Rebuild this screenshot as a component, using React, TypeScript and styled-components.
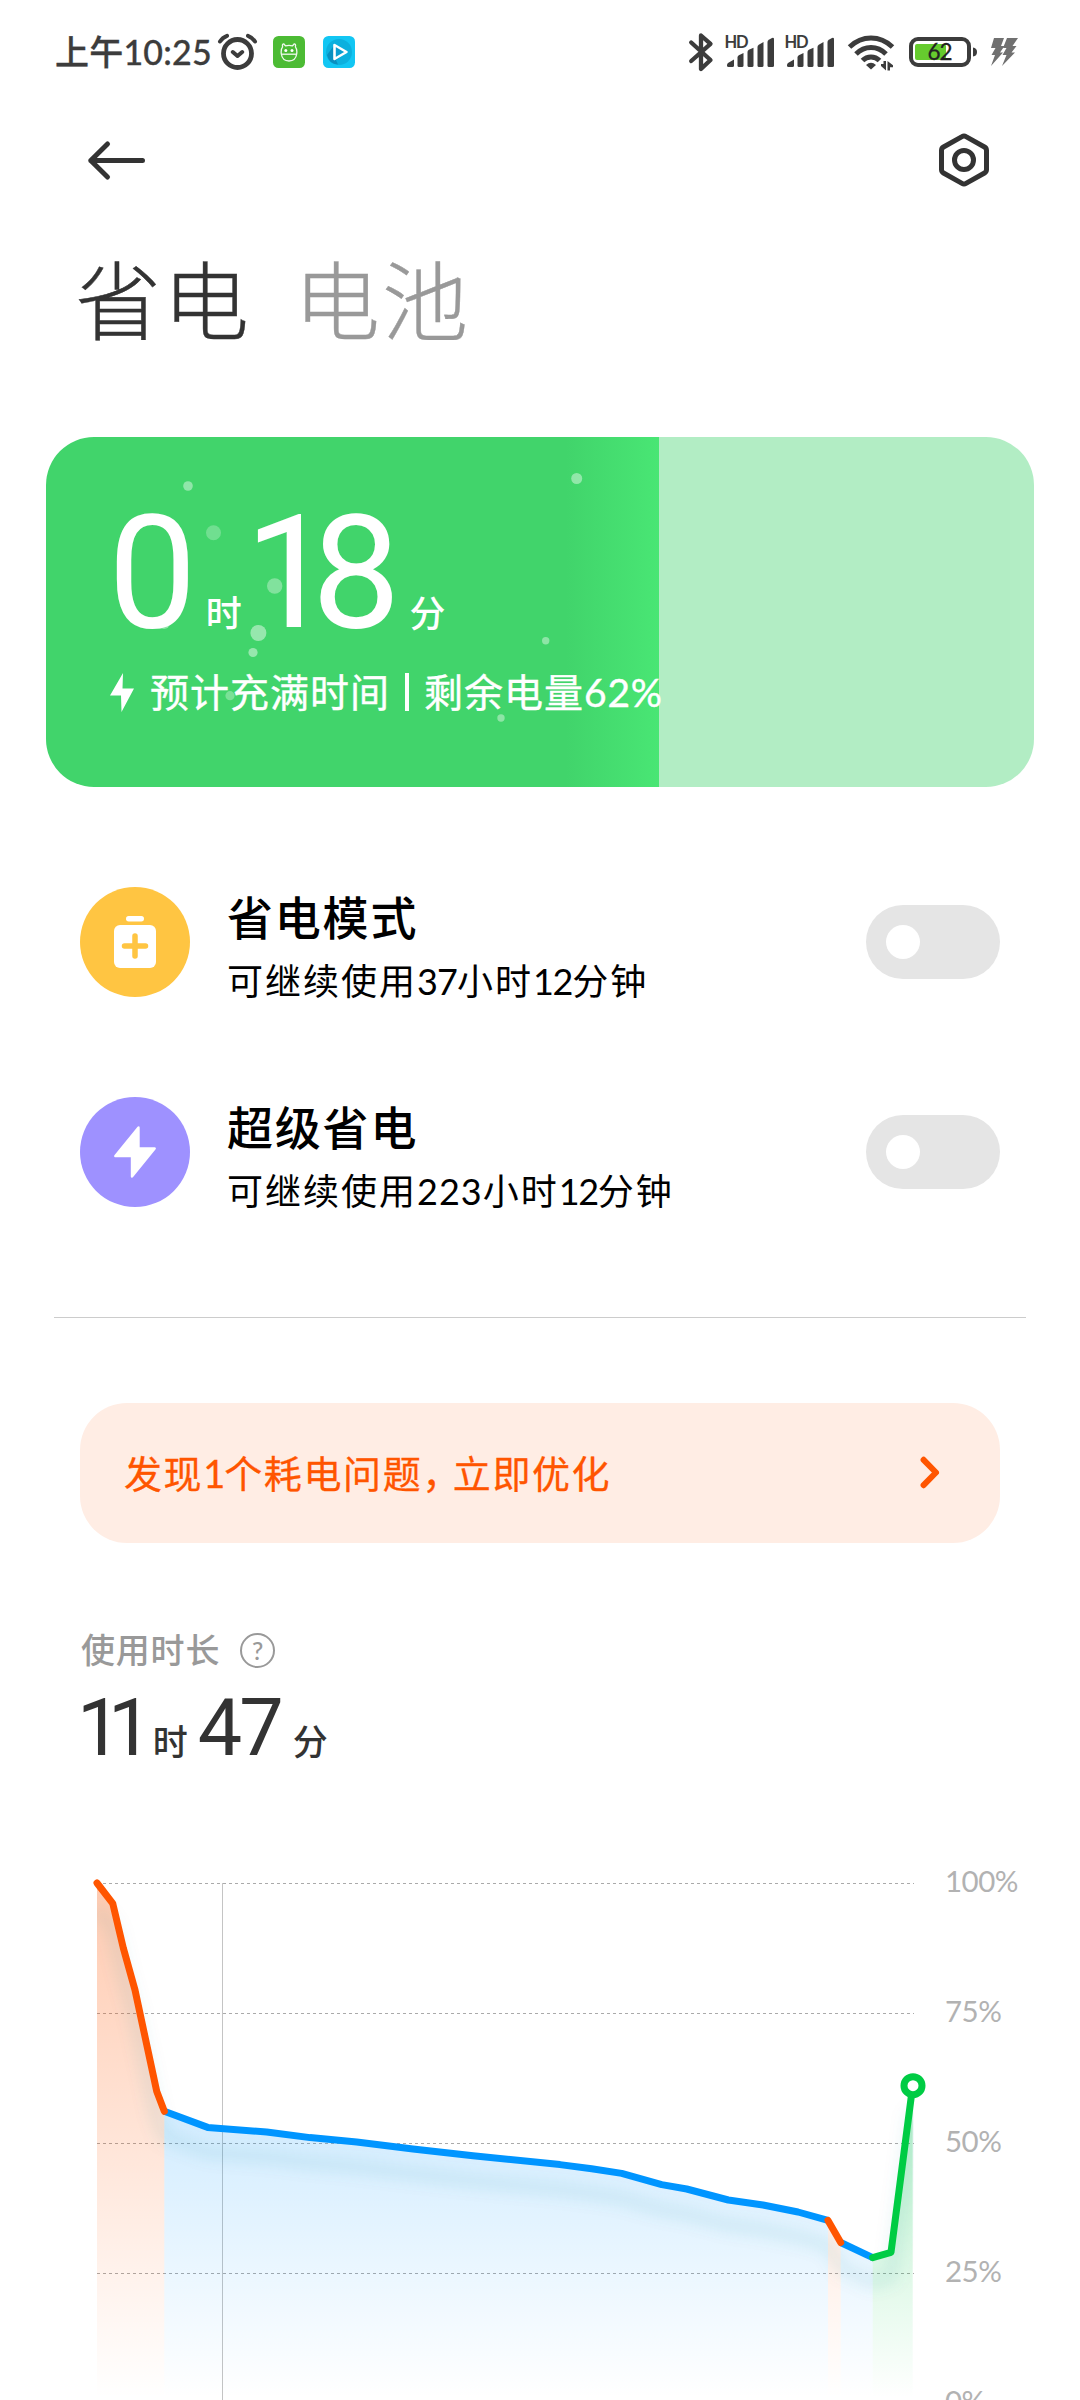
import React from "react";
import styled, { createGlobalStyle } from "styled-components";

const GlobalStyle = createGlobalStyle`
  html, body { margin: 0; padding: 0; background: #fff; }
  * { box-sizing: border-box; }
`;

const textStack = `Lato, "Noto Sans CJK SC", sans-serif`;
const digitStack = `Roboto, "Noto Sans CJK SC", sans-serif`;

const Page = styled.main`
  width: 1080px;
  height: 2400px;
  overflow: hidden;
  display: flex;
  flex-direction: column;
  background: #fff;
  color: #333;
  font-family: ${textStack};
  white-space: nowrap;
`;

const StatusBar = styled.header`
  height: 104px;
  flex: none;
  display: flex;
  align-items: center;
  padding: 0 62px 0 55px;
`;

const Clock = styled.span`
  width: 161px;
  font-size: 34px;
  font-weight: 500;
  line-height: 40px;
  letter-spacing: 0.2px;
  color: #3c3c3c;
  -webkit-text-stroke: 0.3px #3c3c3c;
`;

const Glyph = styled.svg<{ $ml?: number }>`
  display: block;
  flex: none;
  overflow: visible;
  margin-left: ${(p) => p.$ml ?? 0}px;
`;

const StatusRight = styled.div`
  display: flex;
  align-items: center;
  margin-left: auto;
`;

const NavBar = styled.nav`
  height: 112px;
  flex: none;
  display: flex;
  align-items: center;
  justify-content: space-between;
  padding: 0 91px 0 88px;
`;

const Tabs = styled.div`
  display: flex;
  flex: none;
  height: 120px;
  gap: 43px;
  margin-top: 25px;
  padding-left: 75px;
`;

const Tab = styled.span<{ $active?: boolean }>`
  font-size: 86px;
  font-weight: 300;
  line-height: 120px;
  letter-spacing: 2px;
  color: ${(p) => (p.$active ? "#333" : "#999")};
  -webkit-text-stroke: 0.4px currentColor;
`;

const ChargeCard = styled.section`
  position: relative;
  flex: none;
  width: 988px;
  height: 350px;
  margin: 76px 46px 0;
  padding: 56px 0 0 62px;
  border-radius: 48px;
  overflow: hidden;
  color: #fff;
  background: linear-gradient(90deg, #41d46b 0, #41d46b 520px, #49e674 613px, #b2edc4 613px);
`;

const Bubbles = styled.svg`
  position: absolute;
  inset: 0;
`;

const ChargeTime = styled.div`
  position: relative;
  display: flex;
  align-items: baseline;
  height: 160px;
  line-height: 160px;
`;

const ChargeDigits = styled.span<{ $ml?: number; $tight?: number }>`
  font-family: ${digitStack};
  font-size: 158px;
  margin-left: ${(p) => p.$ml ?? 0}px;
  letter-spacing: ${(p) => p.$tight ?? 0}px;
`;

const ChargeUnit = styled.span<{ $ml: number }>`
  font-size: 36px;
  font-weight: 500;
  margin-left: ${(p) => p.$ml}px;
`;

const ChargeNote = styled.div`
  position: relative;
  display: flex;
  align-items: center;
  height: 60px;
  margin-top: 9px;
  font-size: 39px;
  line-height: 60px;
  letter-spacing: 1px;
  -webkit-text-stroke: 0.4px #fff;
`;

const NoteText = styled.span`
  margin-left: 16px;
`;

const NoteBar = styled.i`
  width: 4px;
  height: 38px;
  margin: 0 15px 0 15px;
  background: #fff;
`;

const Num = styled.span<{ $ls: number }>`
  letter-spacing: ${(p) => p.$ls}px;
`;

const Modes = styled.section`
  flex: none;
  display: flex;
  flex-direction: column;
  gap: 100px;
  padding: 100px 80px 0;
`;

const ModeRow = styled.div`
  display: flex;
  align-items: center;
  height: 110px;
`;

const ModeIcon = styled.div<{ $color: string }>`
  width: 110px;
  height: 110px;
  border-radius: 50%;
  display: flex;
  align-items: center;
  justify-content: center;
  background: ${(p) => p.$color};
`;

const ModeText = styled.div`
  display: flex;
  flex-direction: column;
  margin-left: 37px;
  padding-top: 14px;
  color: #000;
`;

const ModeTitle = styled.span`
  font-size: 46px;
  font-weight: 500;
  line-height: 64px;
  letter-spacing: 1.8px;
`;

const ModeDetail = styled.span`
  font-size: 36px;
  line-height: 62px;
  letter-spacing: 2px;
`;

const Switch = styled.button`
  width: 134px;
  height: 74px;
  margin-left: auto;
  padding: 0 20px;
  border: 0;
  border-radius: 37px;
  display: flex;
  align-items: center;
  background: #e5e5e5;
`;

const Knob = styled.span`
  width: 34px;
  height: 34px;
  border-radius: 50%;
  background: #fff;
`;

const Divider = styled.hr`
  flex: none;
  width: 972px;
  height: 1px;
  margin: 110px 54px 0;
  border: 0;
  background: #ccc;
`;

const Notice = styled.section`
  flex: none;
  display: flex;
  align-items: center;
  justify-content: space-between;
  height: 140px;
  margin: 85px 80px 0;
  padding: 0 59px 0 44px;
  border-radius: 47px;
  background: #ffede4;
  color: #ff5500;
  font-size: 38px;
  line-height: 60px;
  letter-spacing: 1.6px;
  -webkit-text-stroke: 0.3px #ff5500;
`;

const UsageLabel = styled.div`
  flex: none;
  display: flex;
  align-items: center;
  gap: 20px;
  height: 44px;
  margin-top: 85px;
  padding-left: 81px;
  font-size: 34px;
  font-weight: 500;
  line-height: 44px;
  letter-spacing: 0.8px;
  color: #999;
`;

const Help = styled.span`
  width: 35px;
  height: 35px;
  border: 2px solid #999;
  border-radius: 50%;
  font-size: 25px;
  line-height: 31px;
  letter-spacing: 0;
  text-align: center;
`;

const UsageTime = styled.div`
  flex: none;
  display: flex;
  align-items: baseline;
  height: 80px;
  margin-top: 16px;
  padding-left: 77px;
  line-height: 80px;
`;

const UsageDigits = styled.span<{ $ml?: number; $tight: number }>`
  font-family: ${digitStack};
  font-size: 79px;
  margin-left: ${(p) => p.$ml ?? 0}px;
  letter-spacing: ${(p) => p.$tight}px;
`;

const UsageUnit = styled.span<{ $ml: number }>`
  font-size: 35px;
  font-weight: 500;
  margin-left: ${(p) => p.$ml}px;
`;

const ChartPanel = styled.section`
  flex: none;
  display: flex;
  height: 640px;
  margin-top: 82px;
  padding-left: 97px;
`;

const Scale = styled.div`
  display: flex;
  flex-direction: column;
  padding-left: 28px;
  padding-top: 13px;
`;

const ScaleLabel = styled.span`
  flex: none;
  height: 130px;
  font-size: 29.5px;
  line-height: 36px;
  letter-spacing: -0.5px;
  color: #b2b2b2;
`;

type Point = [number, number];

const heavyStart: Point[] = [[0, 33], [15.7, 53.3], [26.3, 98], [38, 140], [59.7, 241.3], [67.3, 261.3]];
const steady: Point[] = [
  [67.3, 261.3], [110.7, 277.4], [169.7, 282], [213, 287.6], [259.7, 292], [316, 299], [376, 305.8],
  [463, 314.6], [494.7, 318.8], [524.7, 323.4], [564.7, 334.6], [589.7, 339], [631.3, 350],
  [666, 355], [701, 362], [731, 370.4],
];
const heavyEnd: Point[] = [[731, 370.4], [743.7, 392.5]];
const steadyEnd: Point[] = [[743.7, 392.5], [775.7, 407.6]];
const charging: Point[] = [[775.7, 407.6], [794, 402.3], [815.7, 235.7]];

const line = (pts: Point[]) => "M" + pts.map((p) => p.join(" ")).join("L");
const area = (pts: Point[]) => `${line(pts)}V550H${pts[0][0]}Z`;
const whole = [...heavyStart, ...steady, ...heavyEnd, ...steadyEnd, ...charging];

const segments = [
  { pts: steady, color: "#0095ff", fill: "url(#blueFill)" },
  { pts: steadyEnd, color: "#0095ff", fill: "url(#blueFill)" },
  { pts: heavyStart, color: "#ff5500", fill: "url(#orangeFill)" },
  { pts: heavyEnd, color: "#ff5500", fill: "url(#orangeFill)" },
  { pts: charging, color: "#00cc44", fill: "url(#greenFill)" },
];

function Fade({ id, color, from, opacity }: { id: string; color: string; from: number; opacity: number }) {
  return (
    <linearGradient id={id} gradientUnits="userSpaceOnUse" x1="0" x2="0" y1={from} y2="548">
      <stop offset="0" stopColor={color} stopOpacity={opacity} />
      <stop offset="1" stopColor={color} stopOpacity="0" />
    </linearGradient>
  );
}

function BatteryChart() {
  return (
    <Glyph width="820" height="550" viewBox="0 0 820 550">
      <defs>
        <Fade id="orangeFill" color="#ff5500" from={33} opacity={0.31} />
        <Fade id="blueFill" color="#0095ff" from={261} opacity={0.18} />
        <Fade id="greenFill" color="#00cc44" from={235} opacity={0.31} />
        <filter id="soft" x="-10%" y="-10%" width="120%" height="130%">
          <feGaussianBlur stdDeviation="7.5" />
        </filter>
        <clipPath id="plot"><rect x="0" y="0" width="817" height="550" /></clipPath>
      </defs>
      {[33.5, 163.5, 293.5, 423.5].map((y) => (
        <path key={y} d={`M0 ${y}H817`} stroke="#aaa" strokeWidth="1" strokeDasharray="3 3" />
      ))}
      <path d="M125.5 33V550" stroke="#c4c4c4" strokeWidth="1" />
      {segments.map((s, i) => <path key={i} d={area(s.pts)} fill={s.fill} />)}
      <g clipPath="url(#plot)">
        <path d={line(whole)} transform="translate(0 25)" fill="none" stroke="#008490" strokeOpacity="0.1" strokeWidth="12" filter="url(#soft)" />
      </g>
      {segments.map((s, i) => (
        <path key={i} d={line(s.pts)} fill="none" stroke={s.color} strokeWidth="7" strokeLinecap={s.color === "#0095ff" ? "butt" : "round"} strokeLinejoin="round" />
      ))}
      <circle cx="816" cy="235.7" r="9" fill="#fff" stroke="#00cc44" strokeWidth="7" />
    </Glyph>
  );
}

function Signal({ ml }: { ml: number }) {
  return (
    <Glyph $ml={ml} width="50" height="40" viewBox="0 0 50 40" fill="#3c3c3c">
      <text x="-0.5" y="16" fontFamily="Lato, sans-serif" fontSize="16.5" fontWeight="700" textLength="24">HD</text>
      <path d="M2 33.2Q2 32 3 31L9 27.4V33.5Q9 35 7.600 35H3.500Q2 35 2 33.500Z" />
      <path d="M12.500 25.500Q12.500 24 13.800 23.300L18.500 21V33.500Q18.500 35 17 35H14Q12.500 35 12.500 33.500Z" />
      <path d="M22.500 20Q22.500 18.500 23.800 17.800L28.500 15.800V33.500Q28.500 35 27 35H24Q22.500 35 22.500 33.500Z" />
      <path d="M32.500 15Q32.500 13.500 33.800 12.700L38.500 10V33.500Q38.500 35 37 35H34Q32.500 35 32.500 33.500Z" />
      <path d="M42.500 10Q42.500 8.500 43.800 7.700L47 6Q49 5.300 49 7.300V33.500Q49 35 47.500 35H44Q42.500 35 42.500 33.500Z" />
    </Glyph>
  );
}

type ModeProps = { color: string; title: string; detail: React.ReactNode; children: React.ReactNode };

function Mode({ color, title, detail, children }: ModeProps) {
  return (
    <ModeRow>
      <ModeIcon $color={color}>{children}</ModeIcon>
      <ModeText>
        <ModeTitle>{title}</ModeTitle>
        <ModeDetail>{detail}</ModeDetail>
      </ModeText>
      <Switch role="switch" aria-checked={false}><Knob /></Switch>
    </ModeRow>
  );
}

const bubbles = [
  [142, 49, 4.8, 0.42], [167.5, 95.7, 7.5, 0.25], [228.7, 149, 7.7, 0.34], [212.4, 196, 8, 0.45],
  [207, 215.5, 4.6, 0.45], [184, 258.7, 4.6, 0.3], [530.7, 41.5, 5.5, 0.42], [499.7, 203.7, 3.7, 0.4],
  [455, 281, 3.7, 0.4], [118, 186, 6, 0.4],
];

export default function App() {
  return (
    <Page>
      <GlobalStyle />
      <StatusBar>
        <Clock>上午10:25</Clock>
        <Glyph $ml={2} width="40" height="40" viewBox="0 0 40 40" fill="none" stroke="#3c3c3c" strokeWidth="4.800" strokeLinecap="round" strokeLinejoin="round">
          <circle cx="19.500" cy="21.500" r="14" />
          <path d="M2 9.500Q4.500 5.500 9 3.800M30 3.800Q34.500 5.500 37 9.500M14.800 20L19.500 24L24.200 20" strokeWidth="4" />
        </Glyph>
        <Glyph $ml={15} width="32" height="32" viewBox="0 0 32 32">
          <rect width="32" height="32" rx="5.500" fill="#4cbb34" />
          <g fill="none" stroke="#fff" strokeWidth="1.300" strokeLinejoin="round" opacity=".92">
            <path d="M8.300 18C7.800 14 9 11.500 9.600 10.800C9 8.500 10.300 7 11.500 8.700L12.500 9.800Q16 8.800 19.500 9.800L20.500 8.700C21.700 7 23 8.500 22.400 10.800C23 11.500 24.200 14 23.700 18C23 22.500 20 25 16 25S9 22.500 8.300 18Z" />
            <path d="M8.300 18.200H23.700" />
          </g>
          <circle cx="12.800" cy="14.500" r="1.500" fill="#fff" /><circle cx="19" cy="14.500" r="1.500" fill="#fff" />
        </Glyph>
        <Glyph $ml={18} width="32" height="32" viewBox="0 0 32 32">
          <rect width="32" height="32" rx="5.500" fill="#12c6f3" />
          <circle cx="16" cy="16" r="13" fill="#0cb0de" />
          <path d="M4 19L12 8L25 16L13 24L15 28.500Q6 28 4 19Z" fill="#088fc0" />
          <path d="M11.500 9V23L23.500 16Z" fill="#0a9dd0" stroke="#fff" strokeWidth="2.600" strokeLinejoin="round" />
        </Glyph>
        <StatusRight>
          <Glyph width="24" height="40" viewBox="0 0 24 40" fill="none" stroke="#3c3c3c" strokeWidth="4.300" strokeLinecap="round" strokeLinejoin="round">
            <path d="M2.200 10.500L21.500 28L12 37V3.500L21.500 11.800L2.200 29" />
          </Glyph>
          <Signal ml={12} />
          <Signal ml={10} />
          <Glyph $ml={13} width="46" height="40" viewBox="0 0 46 40" fill="none" stroke="#3c3c3c" strokeWidth="5">
            <path d="M1.500 15Q11 6 23 6T44.500 15M8 22Q14.500 15.500 23 15.500T38 22M14.500 28.500Q18 25 23 25T31.500 28.500" />
            <path d="M18 33Q23 28.500 28 33L23 37.500Z" fill="#3c3c3c" stroke="none" />
            <path d="M35.500 29H38V38.500L33 34V32H35.500ZM39.500 38.500V29L45 33.300V35.200H42V38.500Z" fill="#3c3c3c" stroke="none" />
          </Glyph>
          <Glyph $ml={15} width="68" height="40" viewBox="0 0 68 40">
            <rect x="6" y="12" width="31" height="16" rx="2" fill="#66cb2e" />
            <rect x="2" y="7" width="58" height="26" rx="7" fill="none" stroke="#3c3c3c" strokeWidth="4" />
            <path d="M64 15.500Q68 16 68 20T64 24.500Z" fill="#3c3c3c" />
            <text x="18.500" y="28" fontFamily={textStack} fontSize="22.500" textLength="25" fill="#222" stroke="#222" strokeWidth="0.300">62</text>
          </Glyph>
          <Glyph $ml={13} width="28" height="40" viewBox="0 0 28 40" fill="#707070">
            <path d="M4 6H14L11 14H14.500L10 20.500H13L1 34L5 23H1.500L5.500 16H1Z" />
            <path d="M17 6H28L22.500 14H26.500L21.500 20.500H25L12 34L16.500 23H12.500L16.500 16H13Z" />
          </Glyph>
        </StatusRight>
      </StatusBar>

      <NavBar>
        <Glyph width="58" height="56" viewBox="0 0 58 56" fill="none" stroke="#333" strokeWidth="5" strokeLinecap="round" strokeLinejoin="round">
          <path d="M54.500 28.500H2.800M19.500 12L2.800 28.500L19.500 45" />
        </Glyph>
        <Glyph width="50" height="56" viewBox="0 0 50 56" fill="none" stroke="#333" strokeWidth="5" strokeLinejoin="round">
          <path d="M23 4.600Q25 3.400 27 4.600L45.500 15Q47.500 16.200 47.500 18.500V37.500Q47.500 39.800 45.500 41L27 51.400Q25 52.600 23 51.400L4.500 41Q2.500 39.800 2.500 37.500V18.500Q2.500 16.200 4.500 15Z" />
          <circle cx="25" cy="28" r="9.500" />
        </Glyph>
      </NavBar>

      <Tabs>
        <Tab $active>省电</Tab>
        <Tab>电池</Tab>
      </Tabs>

      <ChargeCard>
        <Bubbles width="988" height="350" viewBox="0 0 988 350">
          {bubbles.map(([x, y, r, o]) => <circle key={`${x}-${y}`} cx={x} cy={y} r={r} fill="#fff" opacity={o} />)}
        </Bubbles>
        <ChargeTime>
          <ChargeDigits>0</ChargeDigits>
          <ChargeUnit $ml={9}>时</ChargeUnit>
          <ChargeDigits $ml={3} $tight={-22}>18</ChargeDigits>
          <ChargeUnit $ml={31}>分</ChargeUnit>
        </ChargeTime>
        <ChargeNote>
          <Glyph $ml={2} width="24" height="39" viewBox="0 0 24 39" fill="#fff">
            <path d="M13 0L0 22.500H11L11.500 39L24 15.500H12.500Z" />
          </Glyph>
          <NoteText>预计充满时间</NoteText>
          <NoteBar />
          <span>剩余电量<Num $ls={0.8}>62%</Num></span>
        </ChargeNote>
      </ChargeCard>

      <Modes>
        <Mode
          color="#ffc542"
          title="省电模式"
          detail={<>可继续使用<Num $ls={-0.9}>37</Num>小时<Num $ls={-1.3}>12</Num>分钟</>}
        >
          <Glyph width="42" height="52" viewBox="0 0 42 52">
            <rect x="12" y="0" width="18" height="5.500" rx="2.700" fill="#fff" />
            <rect x="0" y="9" width="42" height="43" rx="6" fill="#fff" />
            <path d="M21 20V40M10.500 30H31.500" stroke="#ffc542" strokeWidth="5.500" strokeLinecap="round" />
          </Glyph>
        </Mode>
        <Mode
          color="#9e91ff"
          title="超级省电"
          detail={<>可继续使用<Num $ls={1}>223</Num>小时<Num $ls={-1.3}>12</Num>分钟</>}
        >
          <Glyph width="42" height="52" viewBox="0 0 42 52" fill="#fff" stroke="#fff" strokeWidth="2.400" strokeLinejoin="round">
            <path d="M24.500 1.500L1.300 30H18V50.500L40.700 22.500H24.500Z" />
          </Glyph>
        </Mode>
      </Modes>

      <Divider />

      <Notice>
        <span>发现<Num $ls={-1}>1</Num>个耗电问题<Num $ls={-7.5}>，</Num>立即优化</span>
        <Glyph width="22" height="32" viewBox="0 0 22 32" fill="none" stroke="#ff5500" strokeWidth="6" strokeLinecap="round" strokeLinejoin="round">
          <path d="M4.600 2.800L17 15.500L4.600 28.200" />
        </Glyph>
      </Notice>

      <UsageLabel>
        使用时长
        <Help>?</Help>
      </UsageLabel>
      <UsageTime>
        <UsageDigits $tight={-13.5}>11</UsageDigits>
        <UsageUnit $ml={14}>时</UsageUnit>
        <UsageDigits $ml={10} $tight={-3}>47</UsageDigits>
        <UsageUnit $ml={12}>分</UsageUnit>
      </UsageTime>

      <ChartPanel>
        <BatteryChart />
        <Scale>
          {["100%", "75%", "50%", "25%", "0%"].map((v) => <ScaleLabel key={v}>{v}</ScaleLabel>)}
        </Scale>
      </ChartPanel>
    </Page>
  );
}
